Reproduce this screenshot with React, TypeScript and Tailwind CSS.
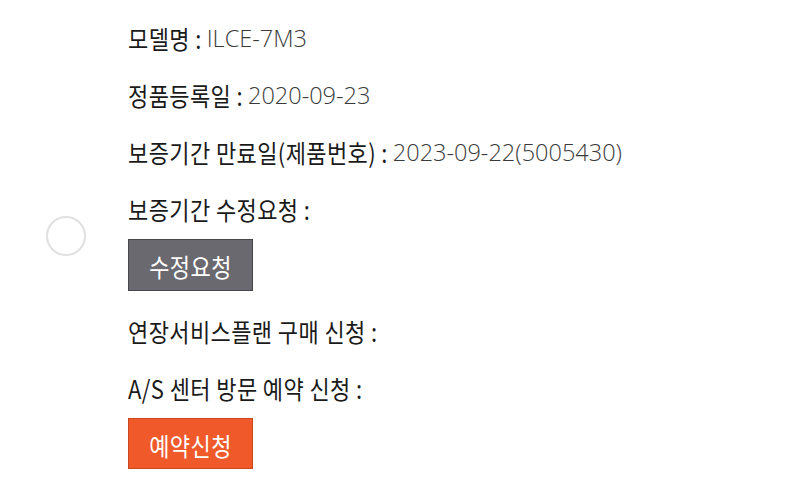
const KR = { fontFamily: '"Noto Sans CJK KR", "Noto Sans", sans-serif' };
const VAL = { fontFamily: '"Open Sans", "Noto Sans CJK KR", sans-serif' };

function L({ children }: { children: React.ReactNode }) {
  return (
    <span className="inline-block leading-none scale-y-[1.16] tracking-[0.4px]" style={KR}>
      {children}
    </span>
  );
}

function V({ children }: { children: React.ReactNode }) {
  return (
    <span className="text-[23.5px] font-light text-[#3a3a3a]" style={VAL}>
      {children}
    </span>
  );
}

export default function App() {
  return (
    <div className="w-[800px] h-[485px] bg-white overflow-hidden relative" style={KR}>
      <div className="absolute left-[46px] top-[216px] w-[40px] h-[40px] rounded-full border-2 border-[#e0e0e0] bg-white" />
      <div className="flex flex-col pl-[128px] pt-[9px] text-[22px] text-[#1a1a1a]">
        <div className="h-[57px] leading-[57px] whitespace-nowrap">
          <L>모델명 :</L> <V>ILCE-7M3</V>
        </div>
        <div className="h-[57px] leading-[57px] whitespace-nowrap">
          <L>정품등록일 :</L> <V>2020-09-23</V>
        </div>
        <div className="h-[57px] leading-[57px] whitespace-nowrap">
          <L>보증기간 만료일(제품번호) :</L> <V>2023-09-22(5005430)</V>
        </div>
        <div className="h-[57px] leading-[57px] whitespace-nowrap">
          <L>보증기간 수정요청 :</L>
        </div>
        <div className="mt-[2px]">
          <button className="w-[125px] h-[52px] bg-[#6a696f] border border-[#48474c] text-white text-[22px] flex items-center justify-center">
            <L>수정요청</L>
          </button>
        </div>
        <div className="mt-[11px] h-[57px] leading-[57px] whitespace-nowrap">
          <L>연장서비스플랜 구매 신청 :</L>
        </div>
        <div className="h-[57px] leading-[57px] whitespace-nowrap">
          <L>A/S 센터 방문 예약 신청 :</L>
        </div>
        <div className="mt-[2px]">
          <button className="w-[125px] h-[51px] bg-[#f0592a] border border-[#c9471f] text-white text-[22px] flex items-center justify-center">
            <L>예약신청</L>
          </button>
        </div>
      </div>
    </div>
  );
}
